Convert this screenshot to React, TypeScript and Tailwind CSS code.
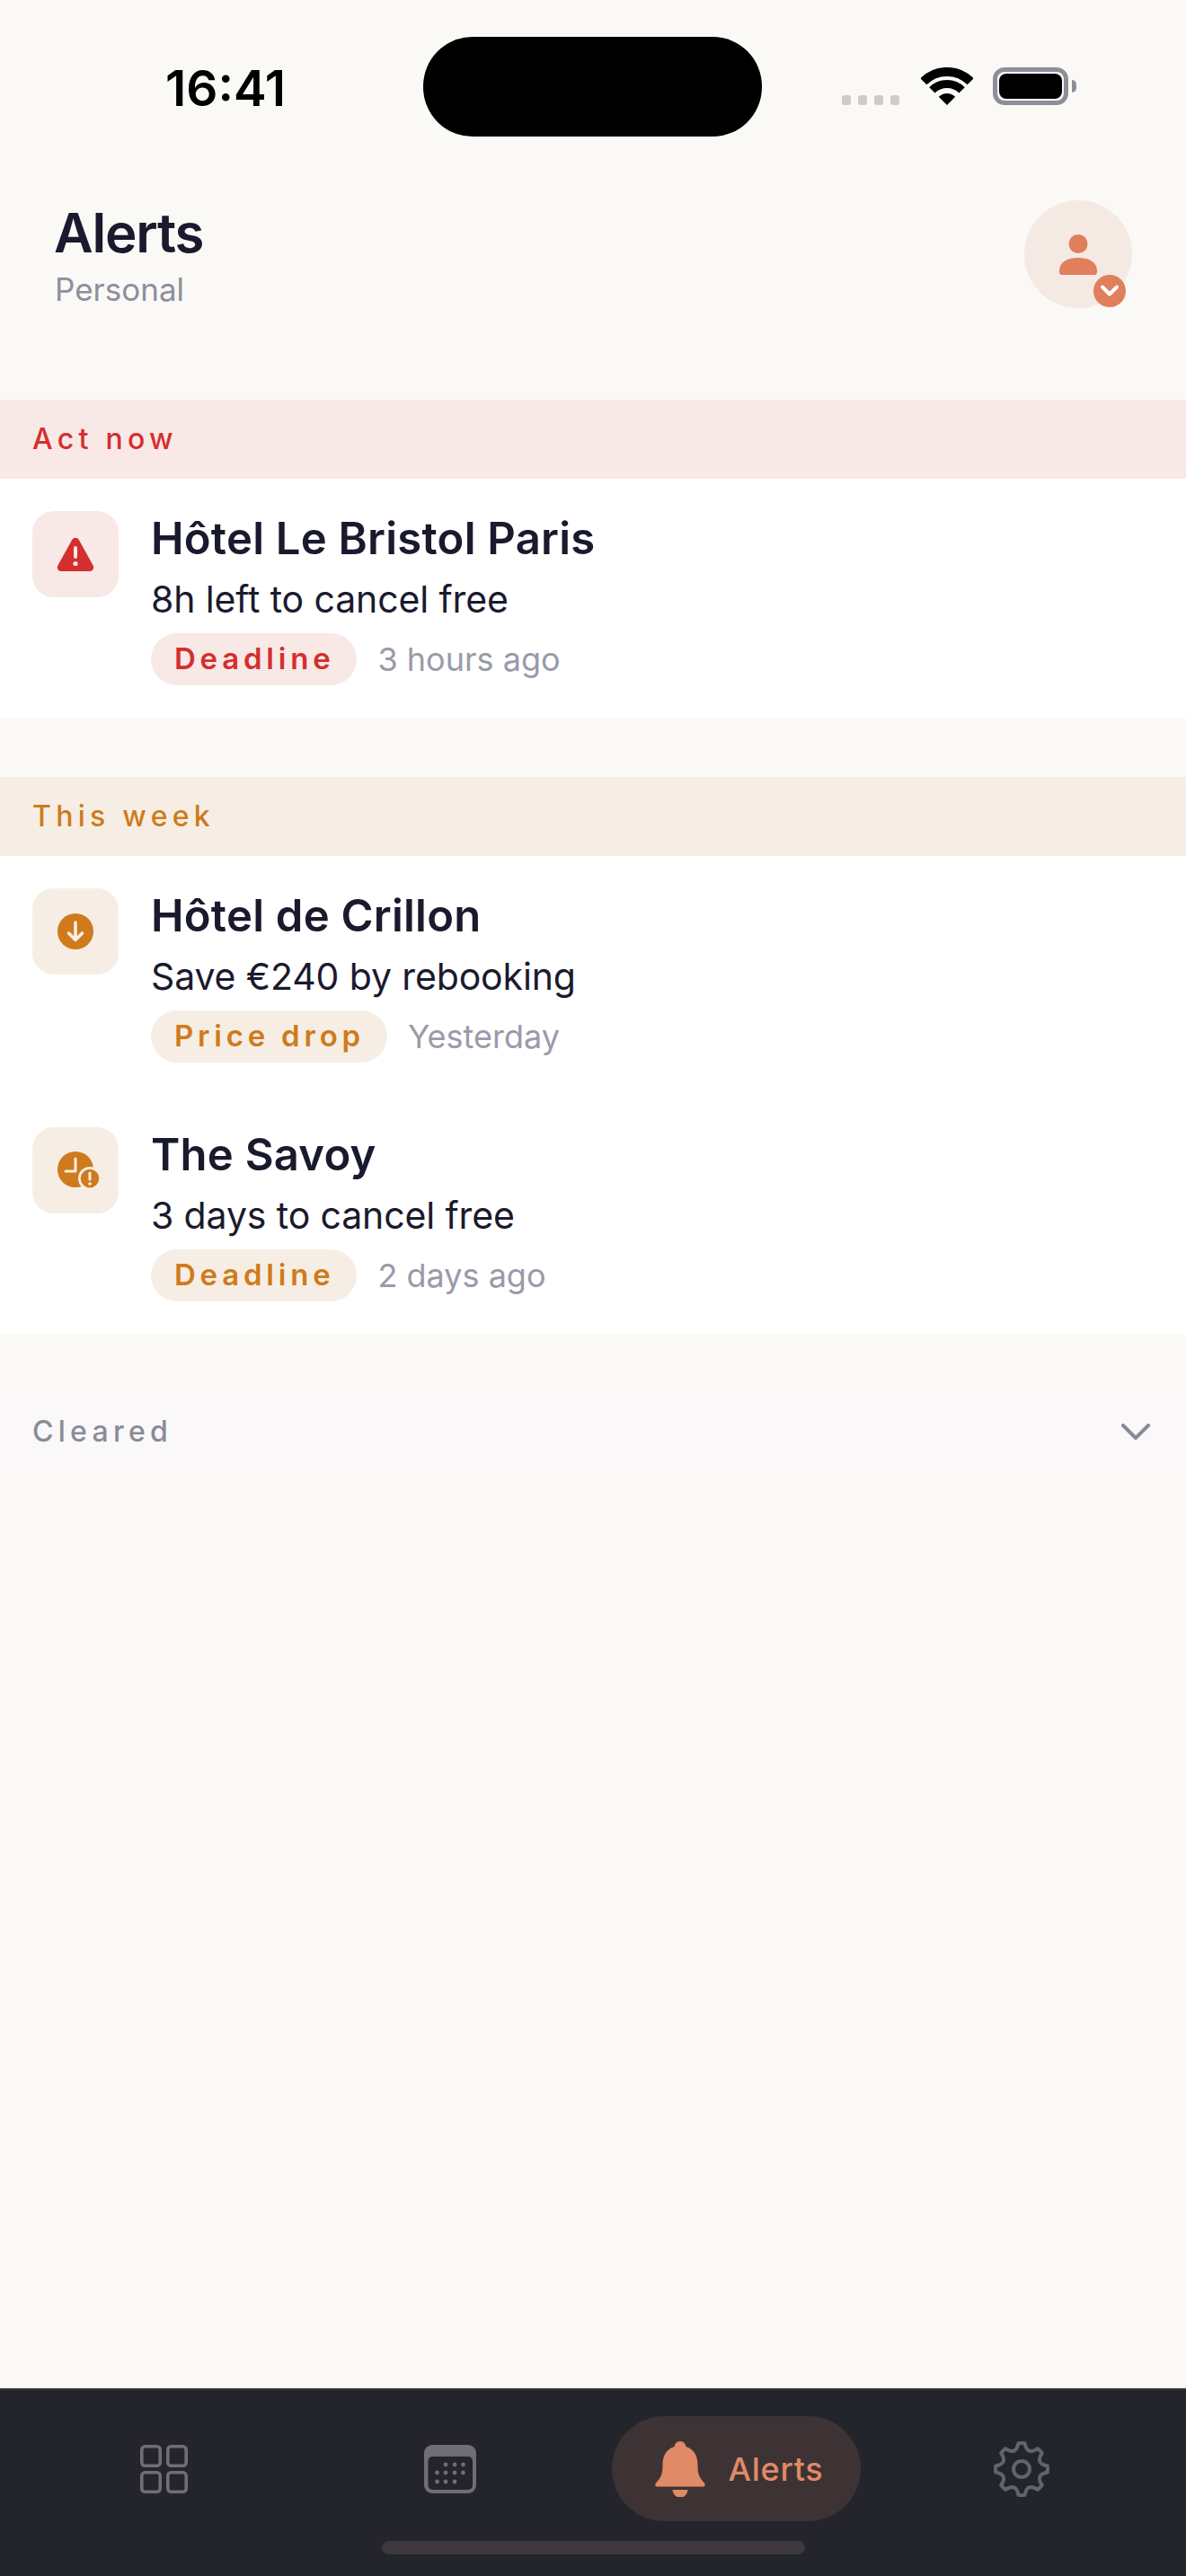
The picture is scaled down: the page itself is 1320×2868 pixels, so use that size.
const gearPath = (() => {
  const cx = 32;
  const cy = 32;
  const polar = (r: number, deg: number) => {
    const a = (deg * Math.PI) / 180;
    return `${(cx + r * Math.cos(a)).toFixed(2)} ${(cy + r * Math.sin(a)).toFixed(2)}`;
  };
  let d = '';
  for (let i = 0; i < 8; i++) {
    const a = -90 + i * 45;
    d += i === 0 ? `M${polar(29, a - 7)}` : '';
    d += ` A29 29 0 0 1 ${polar(29, a + 7)}`;
    d += ` Q${polar(16, a + 22.5)} ${polar(29, a + 38)}`;
  }
  return d + ' Z';
})();

function WifiIcon() {
  return (
    <svg width="58" height="42" viewBox="0 0 58 42" fill="none" className="block">
      <path d="M2.8 15.8A37 37 0 0 1 55.2 15.8" stroke="#000" strokeWidth="10" />
      <path d="M12.4 25.4A23.5 23.5 0 0 1 45.6 25.4" stroke="#000" strokeWidth="9" />
      <path d="M29 42L19.8 32.8A13 13 0 0 1 38.2 32.8Z" fill="#000" />
    </svg>
  );
}

function WarningIcon() {
  return (
    <svg width="42" height="38" viewBox="0 0 42 38" className="block">
      <path d="M17.2 3C18.9 0 23.1 0 24.8 3L40.6 31.5C42.2 34.4 40.2 38 36.8 38H5.2C1.8 38 -0.2 34.4 1.4 31.5Z" fill="#d32f2f" />
      <rect x="19" y="10" width="4" height="14" rx="2" fill="#f8e8e6" />
      <circle cx="21" cy="29.5" r="2.6" fill="#f8e8e6" />
    </svg>
  );
}

function DropIcon() {
  return (
    <svg width="40" height="40" viewBox="0 0 40 40" fill="none" className="block">
      <circle cx="20" cy="20" r="20" fill="#cf7a1c" />
      <path d="M20 10V29M12.5 22L20 29.5L27.5 22" stroke="#f6eee4" strokeWidth="3.6" strokeLinecap="round" strokeLinejoin="round" />
    </svg>
  );
}

function ClockIcon() {
  return (
    <svg width="54" height="54" viewBox="0 0 54 54" fill="none" className="block">
      <circle cx="20" cy="20" r="20" fill="#cf7a1c" />
      <path d="M20 8V22H9" stroke="#f6eee4" strokeWidth="3" strokeLinecap="round" strokeLinejoin="round" />
      <circle cx="36" cy="30" r="13" fill="#f6eee4" />
      <circle cx="36" cy="30" r="10.3" fill="#cf7a1c" />
      <rect x="34.5" y="22.5" width="3" height="10" rx="1.5" fill="#f6eee4" />
      <circle cx="36" cy="36" r="1.8" fill="#f6eee4" />
    </svg>
  );
}

function GridIcon() {
  return (
    <svg width="54" height="54" viewBox="0 0 54 54" fill="none" stroke="#6e6d78" strokeWidth="3.6" className="block">
      <rect x="1.8" y="1.8" width="20.4" height="21.4" rx="3.5" />
      <rect x="30.8" y="1.8" width="20.4" height="21.4" rx="3.5" />
      <rect x="1.8" y="30.8" width="20.4" height="21.4" rx="3.5" />
      <rect x="30.8" y="30.8" width="20.4" height="21.4" rx="3.5" />
    </svg>
  );
}

function CalendarIcon() {
  const dots = [
    [24, 22], [34, 22], [43.5, 22],
    [14.5, 31], [24, 31], [34, 31], [43.5, 31],
    [14.5, 41], [24, 41], [34, 41],
  ];
  return (
    <svg width="58" height="54" viewBox="0 0 58 54" className="block">
      <rect width="58" height="54" rx="9" fill="#6e6d78" />
      <rect x="4.5" y="13" width="49.5" height="37" rx="5" fill="#23242c" />
      {dots.map(([x, y]) => (
        <circle key={`${x}-${y}`} cx={x} cy={y} r="2.4" fill="#6e6d78" />
      ))}
    </svg>
  );
}

function BellIcon() {
  return (
    <svg width="56" height="62" viewBox="0 0 56 62" fill="#e08a68" className="block">
      <path d="M28 0C24 0 22 3 21.5 6C12 9 8.5 17 8.5 26C8.5 36 7 40 1.5 46C-0.5 48 0 50.5 3 50.5H53C56 50.5 56.5 48 54.5 46C49 40 47.5 36 47.5 26C47.5 17 44 9 34.5 6C34 3 32 0 28 0Z" />
      <path d="M19.5 54H36.5A8.5 8.5 0 0 1 19.5 54Z" />
    </svg>
  );
}

function GearIcon() {
  return (
    <svg width="64" height="64" viewBox="0 0 64 64" fill="none" stroke="#63636d" strokeWidth="4" strokeLinejoin="round" className="block">
      <path d={gearPath} />
      <circle cx="32" cy="32" r="9" />
    </svg>
  );
}

function AlertRow({ icon, title, detail, tag, time, tone }: {
  icon: React.ReactNode;
  title: string;
  detail: string;
  tag: string;
  time: string;
  tone: 'red' | 'amber';
}) {
  return (
    <div className="flex gap-9 p-9 bg-white">
      <div className={`w-24 h-24 rounded-3xl flex items-center justify-center shrink-0 ${tone === 'red' ? 'bg-[#f8e8e6]' : 'bg-[#f6eee4]'}`}>
        {icon}
      </div>
      <div className="flex flex-col">
        <div className="text-[49px] leading-[62px] font-semibold tracking-[0.005em] text-[#1a1a2e]">{title}</div>
        <div className="mt-[6px] text-[41px] leading-[60px] tracking-[-0.003em] text-[#1a1a2e]">{detail}</div>
        <div className="mt-2 flex items-center gap-[23px]">
          <span className={`h-[58px] pl-[26px] pr-[25px] rounded-full flex items-center text-[33px] font-semibold tracking-[0.145em] ${tone === 'red' ? 'bg-[#f8e8e6] text-[#d32f2f]' : 'bg-[#f6eee4] text-[#cf7a1c]'}`}>
            {tag}
          </span>
          <span className="text-[36px] text-[#9a9aa8]">{time}</span>
        </div>
      </div>
    </div>
  );
}

function SectionLabel({ label, tone }: { label: string; tone: 'red' | 'amber' }) {
  return (
    <div className={`h-[88px] px-9 flex items-center text-[32px] font-medium tracking-[0.165em] ${tone === 'red' ? 'bg-[#f8e8e6] text-[#d32f2f]' : 'bg-[#f6eee4] text-[#cf7a1c]'}`}>
      {label}
    </div>
  );
}

export default function App() {
  return (
    <div className="w-[1320px] h-[2868px] flex flex-col bg-[#faf9f5] [font-family:Inter,sans-serif]">
      {/* status bar */}
      <div className="flex items-start pt-[41px]">
        <div className="w-[471px] pl-[184px] pt-[27px] text-[55px] leading-[60px] font-semibold text-black">16:41</div>
        <div className="w-[377px] h-[111px] rounded-[55px] bg-black" />
        <div className="flex items-end pt-[34px] pl-[89px]">
          <div className="flex gap-2 items-center">
            <span className="w-[10px] h-[11px] rounded-[3px] bg-[#d0cac8]" />
            <span className="w-[10px] h-[11px] rounded-[3px] bg-[#d0cac8]" />
            <span className="w-[10px] h-[11px] rounded-[3px] bg-[#d0cac8]" />
            <span className="w-[10px] h-[11px] rounded-[3px] bg-[#d0cac8]" />
          </div>
          <div className="ml-[24px]"><WifiIcon /></div>
          <div className="ml-[22px] flex items-center">
            <div className="w-[84px] h-[42px] rounded-[13px] border-[5px] border-[#8e8e9a] p-[2px]">
              <div className="w-full h-full rounded-[8px] bg-black" />
            </div>
            <div className="w-[5px] h-[14px] ml-[4px] rounded-r-full bg-[#8e8e9a]" />
          </div>
        </div>
      </div>

      {/* header */}
      <div className="flex items-start justify-between pl-[60px] pr-[60px] pt-[71px] pb-[102px]">
        <div>
          <div className="text-[60px] leading-[72px] font-semibold text-[#1a1a2e] tracking-[-0.02em]">Alerts</div>
          <div className="text-[35px] leading-[42px] text-[#8e8e9e] mt-[6px] ml-[1px]">Personal</div>
        </div>
        <div className="relative w-[120px] h-[120px] rounded-full bg-[#f5e9e3] flex items-center justify-center">
          <svg width="42" height="45" viewBox="0 0 42 45" fill="#e07f5c" className="block">
            <circle cx="21" cy="10.5" r="10.5" />
            <path d="M0 41C0 30 10 26 21 26C32 26 42 30 42 41C42 44 41 45 39 45H3C1 45 0 44 0 41Z" />
          </svg>
          <div className="absolute right-[7px] bottom-[1px] w-9 h-9 rounded-full bg-[#e07f5c] flex items-center justify-center">
            <svg width="24" height="16" viewBox="0 0 24 16" fill="none" stroke="#fff" strokeWidth="4" strokeLinecap="round" strokeLinejoin="round" className="block">
              <path d="M4 3.5L12 11.5L20 3.5" />
            </svg>
          </div>
        </div>
      </div>

      <SectionLabel label="Act now" tone="red" />
      <AlertRow icon={<WarningIcon />} title="Hôtel Le Bristol Paris" detail="8h left to cancel free" tag="Deadline" time="3 hours ago" tone="red" />

      <div className="h-[66px]" />

      <SectionLabel label="This week" tone="amber" />
      <AlertRow icon={<DropIcon />} title="Hôtel de Crillon" detail="Save €240 by rebooking" tag="Price drop" time="Yesterday" tone="amber" />
      <AlertRow icon={<div className="pl-[14px] pt-[14px] pb-[2px]"><ClockIcon /></div>} title="The Savoy" detail="3 days to cancel free" tag="Deadline" time="2 days ago" tone="amber" />

      <div className="h-[65px]" />

      <div className="h-[88px] pl-9 pr-[40px] flex items-center justify-between bg-[#faf8f8]">
        <span className="text-[32px] font-medium tracking-[0.165em] text-[#8a8a98]">Cleared</span>
        <svg width="32" height="18" viewBox="0 0 32 18" fill="none" stroke="#8a8a98" strokeWidth="4" strokeLinecap="round" strokeLinejoin="round" className="block">
          <path d="M2 2L16 16L30 2" />
        </svg>
      </div>

      {/* tab bar */}
      <div className="mt-auto h-[209px] bg-[#23242c] border-t-2 border-[#3a3236] flex flex-col">
        <div className="grid grid-cols-4 px-6 pt-[29px] h-[146px] items-center">
          <div className="flex justify-center"><GridIcon /></div>
          <div className="flex justify-center"><CalendarIcon /></div>
          <div className="flex justify-center">
            <div className="w-[277px] h-[117px] rounded-full bg-[#3d3335] flex items-center pl-[48px] gap-[26px]">
              <BellIcon />
              <span className="text-[36px] font-medium tracking-[0.02em] text-[#e08a68]">Alerts</span>
            </div>
          </div>
          <div className="flex justify-center"><GearIcon /></div>
        </div>
        <div className="mt-[22px] mx-auto w-[471px] h-[15px] rounded-full bg-[#3d383d]" />
      </div>
    </div>
  );
}
